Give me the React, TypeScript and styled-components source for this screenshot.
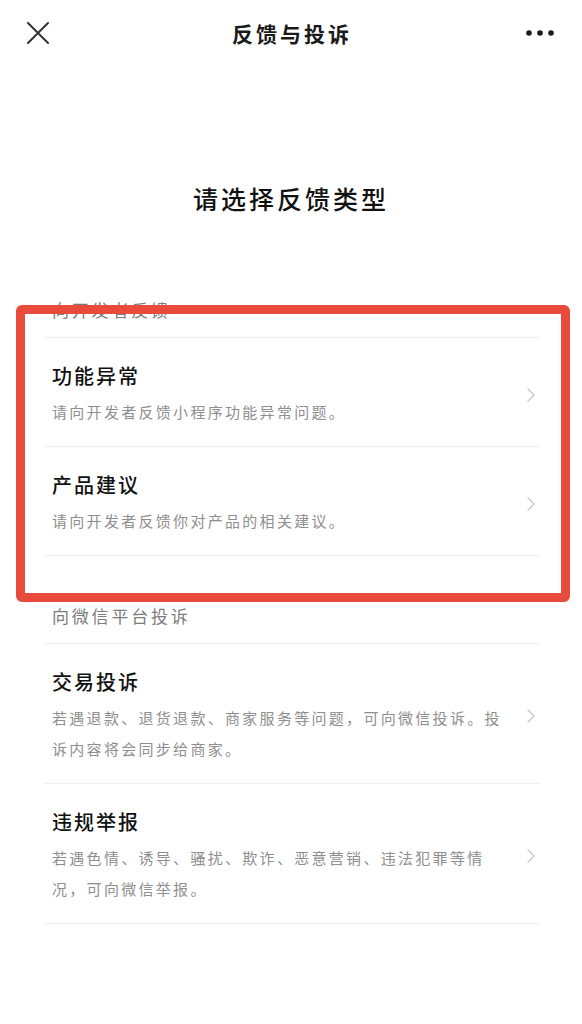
import styled, { createGlobalStyle } from "styled-components";

interface Entry {
  id: string;
  title: string;
  desc: string;
}

interface Section {
  id: string;
  label: string;
  entries: Entry[];
}

const sections: Section[] = [
  {
    id: "dev",
    label: "向开发者反馈",
    entries: [
      { id: "bug", title: "功能异常", desc: "请向开发者反馈小程序功能异常问题。" },
      { id: "idea", title: "产品建议", desc: "请向开发者反馈你对产品的相关建议。" },
    ],
  },
  {
    id: "wx",
    label: "向微信平台投诉",
    entries: [
      {
        id: "trade",
        title: "交易投诉",
        desc: "若遇退款、退货退款、商家服务等问题，可向微信投诉。投诉内容将会同步给商家。",
      },
      {
        id: "report",
        title: "违规举报",
        desc: "若遇色情、诱导、骚扰、欺诈、恶意营销、违法犯罪等情况，可向微信举报。",
      },
    ],
  },
];

const GlobalStyle = createGlobalStyle`
  html, body {
    margin: 0;
    padding: 0;
    background: #ffffff;
  }
  body {
    font-family: "Noto Sans CJK SC", "Noto Sans", sans-serif;
    color: #111;
  }
`;

const Page = styled.div`
  position: relative;
  width: 582px;
  min-height: 1024px;
  background: #fff;
`;

const NavBar = styled.div`
  height: 66px;
  display: flex;
  align-items: center;
  justify-content: space-between;
  padding: 0 22px 0 18px;
  box-sizing: border-box;
`;

const NavTitle = styled.div`
  font-size: 21px;
  font-weight: 700;
  letter-spacing: 3px;
  color: #1a1a1a;
  margin-left: 6px;
`;

const IconButton = styled.div`
  width: 40px;
  height: 40px;
  display: flex;
  align-items: center;
  justify-content: center;
`;

const Heading = styled.h1`
  margin: 114px 0 34px;
  font-size: 25px;
  line-height: 36px;
  font-weight: 500;
  letter-spacing: 3px;
  text-align: center;
  color: #111;
`;

const List = styled.div`
  margin: 0 42px 0 44px;
`;

const SectionLabel = styled.div`
  padding: 48px 8px 15px;
  font-size: 17px;
  line-height: 24px;
  letter-spacing: 2.8px;
  color: #7c7c7c;
  border-bottom: 1px solid #efefef;
`;

const Row = styled.div`
  display: flex;
  align-items: center;
  padding: 24px 5px 19px 8px;
  border-bottom: 1px solid #efefef;
`;

const RowBody = styled.div`
  flex: 1;
  min-width: 0;
`;

const RowTitle = styled.div`
  font-size: 20px;
  line-height: 28px;
  letter-spacing: 2px;
  font-weight: 500;
  color: #111;
`;

const RowDesc = styled.div`
  margin-top: 6px;
  font-size: 15px;
  line-height: 31px;
  letter-spacing: 2.3px;
  color: #8e8e8e;
  line-break: strict;
`;

const Chevron = styled.div`
  width: 8px;
  margin-left: 15px;
  display: flex;
  align-items: center;
`;

const Highlight = styled.div`
  position: absolute;
  left: 16px;
  top: 305px;
  width: 554px;
  height: 297px;
  box-sizing: border-box;
  border: 9px solid #e84a3c;
  border-radius: 6px;
  pointer-events: none;
`;

const CloseIcon = () => (
  <svg width="22" height="22" viewBox="0 0 22 22">
    <path d="M1 1 L21 21 M21 1 L1 21" stroke="#333" strokeWidth="2" strokeLinecap="round" />
  </svg>
);

const MoreIcon = () => (
  <svg width="28" height="8" viewBox="0 0 28 8">
    <circle cx="3" cy="4" r="2.8" fill="#1a1a1a" />
    <circle cx="14" cy="4" r="2.8" fill="#1a1a1a" />
    <circle cx="25" cy="4" r="2.8" fill="#1a1a1a" />
  </svg>
);

const ChevronIcon = () => (
  <svg width="8" height="14" viewBox="0 0 8 14">
    <path d="M1 1 L7 7 L1 13" fill="none" stroke="#c9c9c9" strokeWidth="1.4" strokeLinecap="round" strokeLinejoin="round" />
  </svg>
);

const App: React.FC = () => {
  return (
    <Page>
      <GlobalStyle />
      <NavBar>
        <IconButton>
          <CloseIcon />
        </IconButton>
        <NavTitle>反馈与投诉</NavTitle>
        <IconButton>
          <MoreIcon />
        </IconButton>
      </NavBar>
      <Heading>请选择反馈类型</Heading>
      <List>
        {sections.map((section) => (
          <div key={section.id}>
            <SectionLabel>{section.label}</SectionLabel>
            {section.entries.map((entry) => (
              <Row key={entry.id}>
                <RowBody>
                  <RowTitle>{entry.title}</RowTitle>
                  <RowDesc>{entry.desc}</RowDesc>
                </RowBody>
                <Chevron>
                  <ChevronIcon />
                </Chevron>
              </Row>
            ))}
          </div>
        ))}
      </List>
      <Highlight />
    </Page>
  );
};

export default App;
